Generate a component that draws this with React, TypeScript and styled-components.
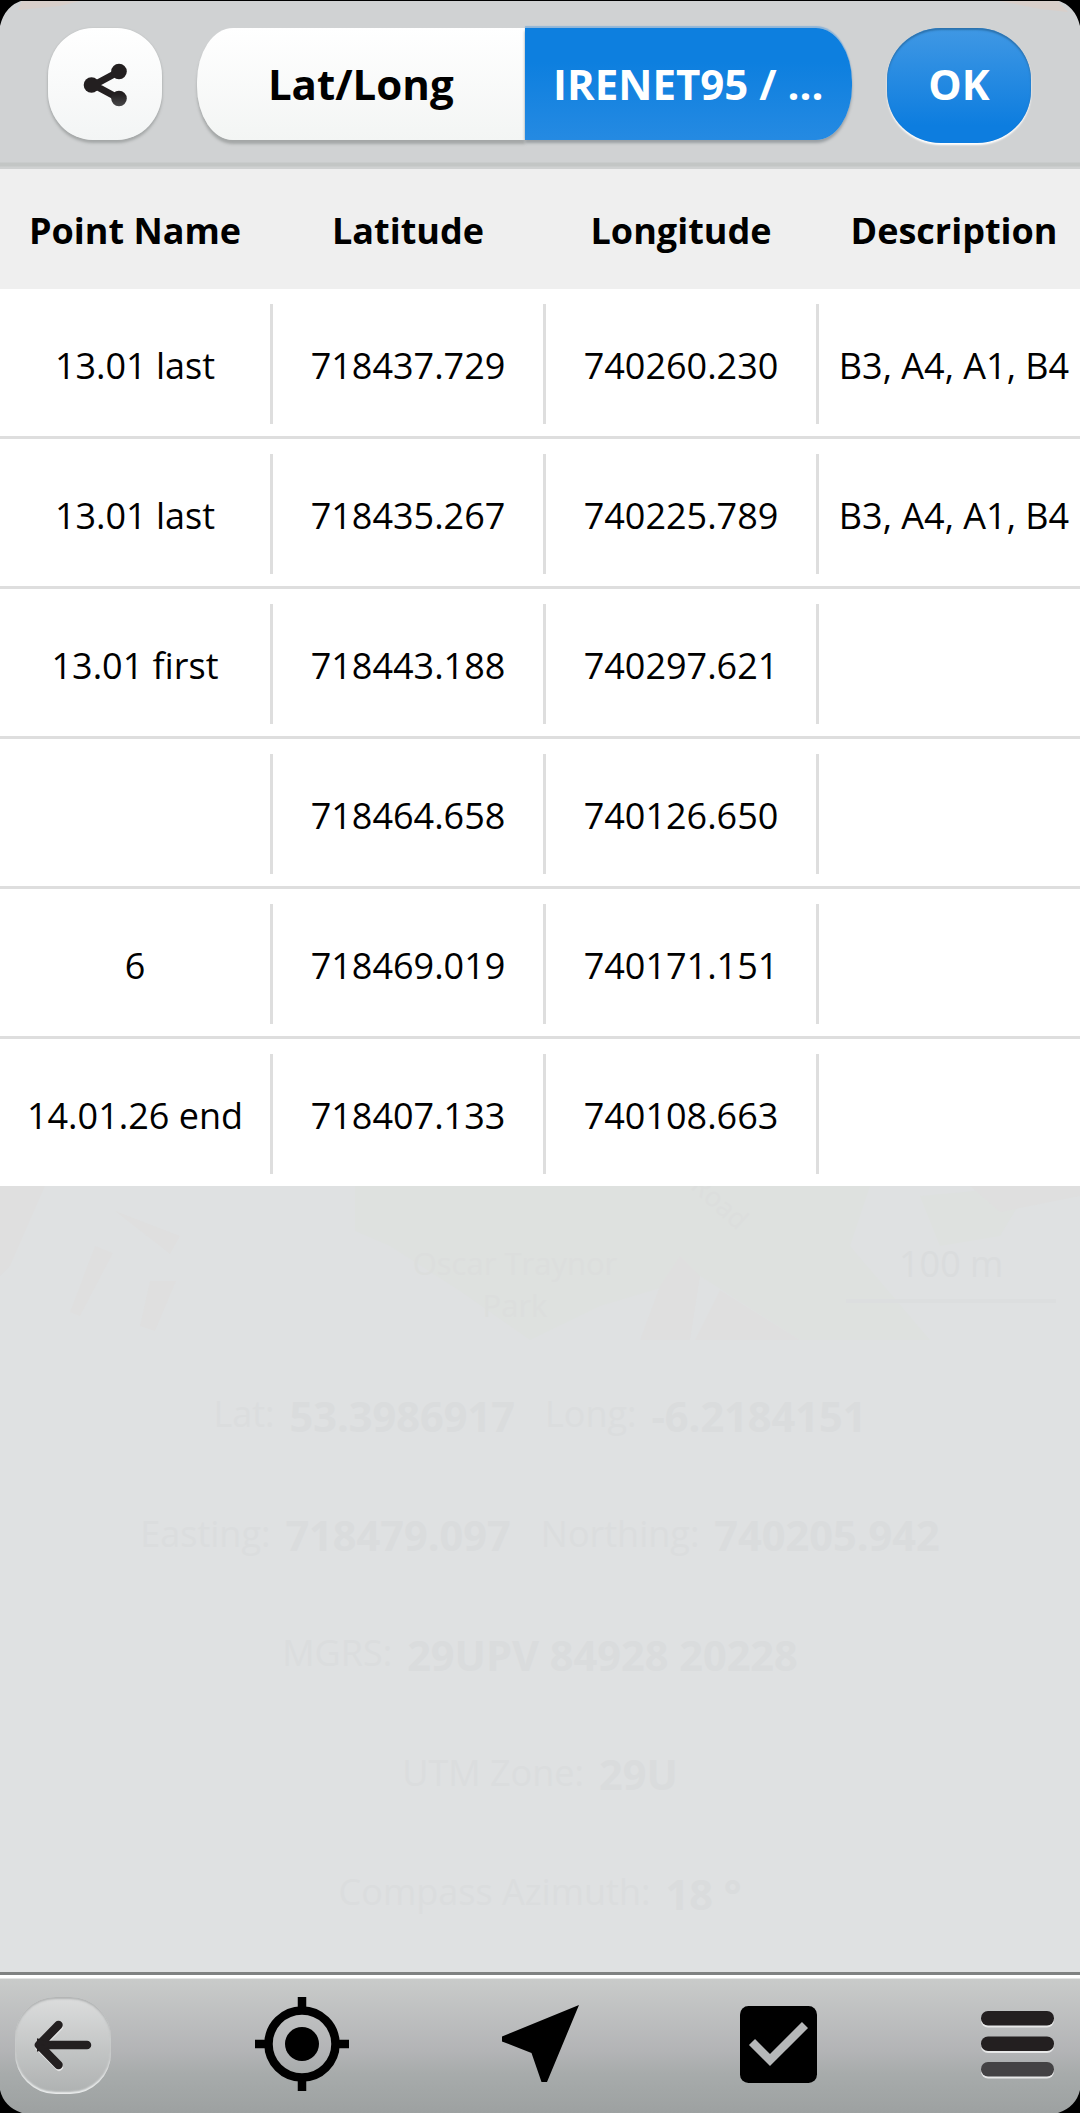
import React from "react";
import styled, { createGlobalStyle, css } from "styled-components";

const Global = createGlobalStyle`
  body { margin: 0; background: #000; }
  * { box-sizing: border-box; }
  button { font: inherit; border: 0; padding: 0; margin: 0; }
`;

const Screen = styled.div`
  position: relative;
  width: 1080px;
  height: 2113px;
  overflow: hidden;
  display: flex;
  flex-direction: column;
  background: #dfe1e2;
  color: #000;
  font-family: "Open Sans", "Noto Sans", sans-serif;
  font-size: 36px;
`;

const TopBar = styled.header`
  flex: none;
  height: 169px;
  display: flex;
  align-items: flex-start;
  padding: 27px 48px 0;
  border-top: 1px solid #000;
  background: linear-gradient(#d0d2d3 0 161px, #c3c6c5 162px 165px, #cfd1d1 166px);
  font-size: 42px;
  font-weight: 700;
`;

const ShareButton = styled.button`
  width: 114px;
  height: 112px;
  display: grid;
  place-items: center;
  padding-top: 2px;
  border-radius: 45px / 48px;
  background: linear-gradient(#fff, #f3f5f5);
  box-shadow: 0 3px 3px #a4a7a7, 0 0 2px #b9bcbc;
`;

const Segments = styled.div`
  display: flex;
  width: 655px;
  height: 112px;
  margin-left: 35px;
`;

const Segment = styled.button<{ $active?: boolean }>`
  flex: 1;
  display: grid;
  place-items: center;
  padding-bottom: 2px;
  font-weight: 700;
  ${({ $active }) =>
    $active
      ? css`
          color: #fff;
          background: linear-gradient(#0d7fdf 30%, #258ae2);
          border-radius: 0 36px 36px 0 / 0 54px 54px 0;
          box-shadow: 0 -2px 1px #8fb5d8, 0 3px 3px #999fa3;
        `
      : css`
          color: #000;
          background: linear-gradient(#fff, #f3f5f4);
          border-radius: 36px 0 0 36px / 54px 0 0 54px;
          box-shadow: 0 4px 3px #a4a7a7;
        `}
`;

const OkButton = styled.button`
  width: 144px;
  height: 115px;
  margin-left: 35px;
  padding-bottom: 4px;
  color: #fff;
  font-weight: 700;
  border-radius: 54px / 52px;
  background: linear-gradient(#4098e4, #0d7ddf 85%);
  box-shadow: inset 0 2px 2px #2b71ac, 0 2px 2px #fff;
`;

const TableHead = styled.div`
  flex: none;
  height: 120px;
  display: flex;
  gap: 3px;
  background: #efefef;
  font-weight: 700;
`;

const HeadCell = styled.div`
  flex: none;
  width: 270px;
  display: grid;
  place-items: center;
  padding-top: 2px;
`;

const Row = styled.div<{ $last?: boolean }>`
  flex: none;
  height: ${({ $last }) => ($last ? 147 : 150)}px;
  display: flex;
  padding: 15px 0 12px;
  background: #fff;
  border-bottom: ${({ $last }) => ($last ? 0 : 3)}px solid #dedede;
`;

const Cell = styled.div`
  flex: none;
  width: 273px;
  display: grid;
  place-items: center;
  white-space: nowrap;
  padding-top: 2px;
  border-right: 3px solid #dedede;
`;

const Ghost = styled.main`
  flex: 1;
  display: flex;
  flex-direction: column;
  background: #dfe1e2;
`;

const MapStrip = styled.div`
  position: relative;
  height: 154px;
  flex: none;
  overflow: hidden;
`;

const MapLabel = styled.div`
  position: absolute;
  left: 400px;
  top: 56px;
  width: 230px;
  color: #dcdedd;
  font-size: 31px;
  line-height: 42px;
  text-align: center;
`;

const RoadLabel = styled.div`
  position: absolute;
  left: 688px;
  top: 0;
  color: #dcdedd;
  font-size: 27px;
  line-height: 32px;
  transform: rotate(42deg);
`;

const MapScale = styled.div`
  position: absolute;
  left: 846px;
  top: 53px;
  width: 210px;
  height: 64px;
  padding-left: 53px;
  color: #dadcdd;
  border-bottom: 4px solid #dcdedf;
  line-height: 50px;
`;

const Readings = styled.div`
  padding-top: 16px;
`;

const Info = styled.div`
  height: 119.5px;
  display: flex;
  justify-content: center;
  align-items: center;
  color: #dbddde;
  white-space: nowrap;
`;

const Label = styled.span`
  padding-bottom: 4px;
  margin-right: 15px;
`;

const Value = styled.b`
  font-size: 41.5px;
  color: #dadcdd;
  & + ${Label} { margin-left: 30px; }
`;

const BottomBar = styled.footer`
  flex: none;
  height: 141px;
  display: flex;
  justify-content: space-between;
  align-items: flex-start;
  padding: 20px 14px 0;
  border-top: 3px solid #7f8181;
  background: linear-gradient(#fff 0 3px, #c9cbca 4px, #b3b4b6 55%, #a7abab 72%, #9da1a1);
`;

const Tool = styled.button`
  width: 98px;
  height: 98px;
  display: grid;
  place-items: center;
  background: none;
`;

const BackButton = styled(Tool)`
  margin: 2px 1px 0;
  width: 96px;
  height: 97px;
  border-radius: 41px;
  background: linear-gradient(#dcdddd, #aeb1b1);
  box-shadow: inset 0 2px 2px #b1b3b3, inset 0 -2px 2px #eceeee;
`;

const Corners = styled.svg`
  position: absolute;
  inset: 0;
  pointer-events: none;
`;

const columns = ["Point Name", "Latitude", "Longitude", "Description"];
const points = [
  ["13.01 last", "718437.729", "740260.230", "B3, A4, A1, B4"],
  ["13.01 last", "718435.267", "740225.789", "B3, A4, A1, B4"],
  ["13.01 first", "718443.188", "740297.621", ""],
  ["", "718464.658", "740126.650", ""],
  ["6", "718469.019", "740171.151", ""],
  ["14.01.26 end", "718407.133", "740108.663", ""],
];
const readings = [
  [["Lat:", "53.3986917"], ["Long:", "-6.2184151"]],
  [["Easting:", "718479.097"], ["Northing:", "740205.942"]],
  [["MGRS:", "29UPV 84928 20228"]],
  [["UTM Zone:", "29U"]],
  [["Compass Azimuth:", "18 °"]],
];

const ShareIcon = () => (
  <svg width="44" height="44" viewBox="0 0 44 44">
    <defs>
      <linearGradient id="share" x1="0" y1="0" x2="0" y2="44" gradientUnits="userSpaceOnUse">
        <stop offset=".7" stopColor="#231f20" />
        <stop offset="1" stopColor="#4a4a4c" />
      </linearGradient>
    </defs>
    <path d="M36 8.500 11 22 36 35.500" fill="none" stroke="#231f20" strokeWidth="7" />
    <g fill="url(#share)">
      <circle cx="36" cy="8.500" r="7.800" />
      <circle cx="8.500" cy="22" r="7.800" />
      <circle cx="36" cy="35.500" r="7.800" />
    </g>
  </svg>
);

const BackIcon = () => (
  <svg width="60" height="52" viewBox="0 0 60 52">
    <path d="M26 5 6 25 26 45" transform="translate(0 2)" fill="none" stroke="#e2e3e3" strokeWidth="8" strokeLinecap="round" strokeLinejoin="round" />
    <path d="M25.500 5 6 25 25.500 45M6 25H54" fill="none" stroke="#231f20" strokeWidth="8.500" strokeLinecap="round" strokeLinejoin="round" />
    <path d="M6 21 17 25 6 29Z" fill="#231f20" stroke="#231f20" strokeWidth="4" />
  </svg>
);

const TargetIcon = () => (
  <svg width="94" height="94" viewBox="0 0 94 94">
    <circle cx="47" cy="47" r="33.500" fill="none" stroke="#000" strokeWidth="8.500" />
    <circle cx="47" cy="47" r="17" />
    <path d="M47 0V14M47 80V94M0 47H14M80 47H94" stroke="#000" strokeWidth="8.500" />
  </svg>
);

const ArrowIcon = () => (
  <svg width="77" height="78" viewBox="0 0 77 78">
    <path d="M77 0 45 77H39.500L29.500 48 0 36.500V31.500Z" />
  </svg>
);

const CheckIcon = () => (
  <svg width="77" height="77" viewBox="0 0 77 77">
    <rect width="77" height="77" rx="8.500" />
    <path d="M12 36 30 54 65 19" fill="none" stroke="#b6b8b9" strokeWidth="8.500" />
  </svg>
);

const MenuIcon = () => (
  <svg width="73" height="70" viewBox="0 0 73 70">
    <g fill="#e7e8e8">
      <rect y="4" width="73" height="14.500" rx="7" />
      <rect y="29.500" width="73" height="14.500" rx="7" />
      <rect y="55" width="73" height="14.500" rx="7" />
    </g>
    <rect y="2" width="73" height="14.500" rx="7" fill="#231f20" />
    <rect y="27.500" width="73" height="14.500" rx="7" fill="#231f20" />
    <rect y="53" width="73" height="14.500" rx="7" fill="#434244" />
  </svg>
);

export default function App() {
  return (
    <Screen>
      <Global />
      <TopBar>
        <ShareButton aria-label="Share"><ShareIcon /></ShareButton>
        <Segments>
          <Segment>Lat/Long</Segment>
          <Segment $active>IRENET95 / ...</Segment>
        </Segments>
        <OkButton>OK</OkButton>
      </TopBar>
      <TableHead>
        {columns.map((c) => <HeadCell key={c}>{c}</HeadCell>)}
      </TableHead>
      {points.map((p, i) => (
        <Row key={i} $last={i === points.length - 1}>
          {p.map((v, j) => <Cell key={j}>{v}</Cell>)}
        </Row>
      ))}
      <Ghost>
        <MapStrip>
          <svg width="1080" height="154" viewBox="0 0 1080 154">
            <path d="M355 0H870L850 60 930 154H800L700 90 600 120 530 154 460 105 390 60 355 45ZM920 10 1030 0 1000 50 940 60Z" fill="#dee1df" />
            <path d="M640 154 660 100 680 70 700 90 690 154ZM695 154 720 104 800 154ZM970 0H1080V10L1000 26ZM0 0H45L10 80 0 90ZM95 60 113 67 80 130 70 126ZM115 25 180 50 170 68ZM150 95 176 95 155 145 140 140Z" fill="#dfdfdf" />
          </svg>
          <MapLabel>Oscar Traynor<br />Park</MapLabel>
          <RoadLabel>Road</RoadLabel>
          <MapScale>100 m</MapScale>
        </MapStrip>
        <Readings>
          {readings.map((line, i) => (
            <Info key={i}>
              {line.map(([k, v]) => (
                <React.Fragment key={k}><Label>{k}</Label><Value>{v}</Value></React.Fragment>
              ))}
            </Info>
          ))}
        </Readings>
      </Ghost>
      <BottomBar>
        <BackButton aria-label="Back"><BackIcon /></BackButton>
        <Tool aria-label="Locate"><TargetIcon /></Tool>
        <Tool aria-label="Navigate"><ArrowIcon /></Tool>
        <Tool aria-label="Select"><CheckIcon /></Tool>
        <Tool aria-label="Menu"><MenuIcon /></Tool>
      </BottomBar>
      <Corners width="1080" height="2113" viewBox="0 0 1080 2113">
        <path d="M22 1H80L60 6 18 10ZM1000 1H1058L1068 12 1040 9Z" fill="#d8cfca" />
        <path d="M0 0H24Q5 5 0 26ZM1080 0H1056Q1075 5 1080 26ZM0 2113H22Q4 2107 0 2090ZM1080 2113H1058Q1076 2107 1080 2090Z" />
      </Corners>
    </Screen>
  );
}
